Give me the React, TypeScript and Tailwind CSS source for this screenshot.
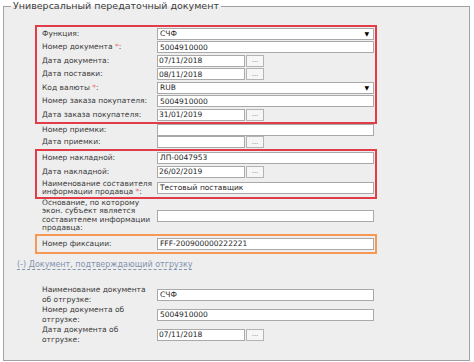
import type { ReactNode } from "react";

const Star = () => <span className="text-[#f07070]">*</span>;

function Field({ kind = "text", value = "" }: { kind?: "text" | "select" | "date"; value?: string }) {
  if (kind === "date") {
    return (
      <div className="flex items-center gap-[1px]">
        <div className="flex h-[12px] w-[88px] items-center border border-[#a9a9a9] bg-white pl-[1px] text-[7.5px] text-[#1e1e1e]">
          {value}
        </div>
        <div className="flex h-[12px] w-[18px] items-center justify-center border border-[#b4b4b4] bg-[#f6f6f6] text-[7px] leading-none text-[#777]">
          ...
        </div>
      </div>
    );
  }
  return (
    <div className="flex h-[12px] w-[217px] items-center justify-between border border-[#a9a9a9] bg-white pl-[2px] pr-[4px] text-[7.5px] text-[#1e1e1e]">
      <span>{value}</span>
      {kind === "select" && <span className="text-[6px] leading-none text-black">▼</span>}
    </div>
  );
}

function Row({
  label,
  kind,
  value,
  rowClass,
  labelClass = "leading-[8px]",
}: {
  label: ReactNode;
  kind?: "text" | "select" | "date";
  value?: string;
  rowClass: string;
  labelClass?: string;
}) {
  return (
    <div className={`flex items-center ${rowClass}`}>
      <div className={`w-[120px] shrink-0 whitespace-nowrap pl-[5px] text-[7.5px] text-[#3a3a3a] ${labelClass}`}>
        {label}
      </div>
      <Field kind={kind} value={value} />
    </div>
  );
}

export default function App() {
  return (
    <div className="h-[362px] w-[474px] overflow-hidden bg-white font-['DejaVu_Sans',sans-serif]">
      <fieldset className="ml-[3px] w-[467px] border border-[#a2a2a2] bg-[#eeeeee] pb-[13px]">
        <legend className="ml-[7px] px-[2px] text-[9.5px] leading-[12px] text-[#3c3c3c]">
          Универсальный передаточный документ
        </legend>

        <div className="ml-[31px] mt-[13px] w-[342px]">
          {/* основные реквизиты */}
          <div className="border-2 border-[#e23c48]">
            <Row rowClass="h-[13.5px]" label="Функция:" kind="select" value="СЧФ" />
            <Row rowClass="h-[13.5px]" label={<>Номер документа <Star />:</>} value="5004910000" />
            <Row rowClass="h-[13.5px]" label="Дата документа:" kind="date" value="07/11/2018" />
            <Row rowClass="h-[13.5px]" label="Дата поставки:" kind="date" value="08/11/2018" />
            <Row rowClass="h-[13.5px]" label={<>Код валюты <Star />:</>} kind="select" value="RUB" />
            <Row rowClass="h-[13.5px]" label="Номер заказа покупателя:" value="5004910000" />
            <Row rowClass="h-[13.5px]" label="Дата заказа покупателя:" kind="date" value="31/01/2019" />
          </div>

          <div className="border-x-2 border-transparent">
            <Row rowClass="h-[12.5px]" label="Номер приемки:" />
            <Row rowClass="h-[12.5px]" label="Дата приемки:" kind="date" />
          </div>

          {/* накладная */}
          <div className="border-2 border-[#e23c48]">
            <Row rowClass="h-[14px]" label="Номер накладной:" value="ЛП-0047953" />
            <Row rowClass="h-[14px]" label="Дата накладной:" kind="date" value="26/02/2019" />
            <Row
              rowClass="h-[18.5px]"
              label={<>Наименование составителя<br />информации продавца <Star />:</>}
              value="Тестовый поставщик"
            />
          </div>

          <div className="flex h-[34.5px] items-center border-x-2 border-transparent">
            <div className="-mt-[1px] w-[120px] shrink-0 whitespace-nowrap pl-[5px] text-[7.5px] leading-[8.3px] text-[#3a3a3a]">
              Основание, по которому
              <br />
              экон. субъект является
              <br />
              составителем информации
              <br />
              продавца:
            </div>
            <Field />
          </div>

          {/* фиксация */}
          <div className="border-2 border-[#f49a55]">
            <Row rowClass="h-[16px]" label="Номер фиксации:" value="FFF-200900000222221" />
          </div>
        </div>

        <div className="ml-[13px] mt-[6px] text-[8px] leading-[10px]">
          <span className="text-[#8394ae] underline decoration-dashed underline-offset-2">
            (-) Документ, подтверждающий отгрузку
          </span>
        </div>

        {/* документ об отгрузке */}
        <div className="ml-[31px] mt-[13px] w-[342px] border-2 border-transparent">
          <Row
            rowClass="h-[20px]"
            labelClass="leading-[10px]"
            label={<>Наименование документа<br />об отгрузке:</>}
            value="СЧФ"
          />
          <Row
            rowClass="h-[20px]"
            labelClass="leading-[10px]"
            label={<>Номер документа об<br />отгрузке:</>}
            value="5004910000"
          />
          <Row
            rowClass="h-[20px]"
            labelClass="leading-[10px]"
            label={<>Дата документа об<br />отгрузке:</>}
            kind="date"
            value="07/11/2018"
          />
        </div>
      </fieldset>
    </div>
  );
}
